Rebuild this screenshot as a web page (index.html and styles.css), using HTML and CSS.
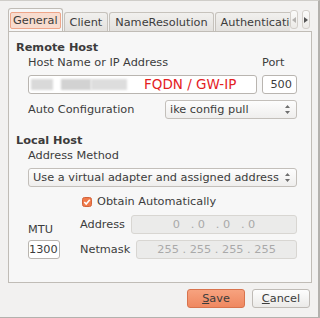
FILE: index.html
```html
<!DOCTYPE html>
<html lang="en">
  <head>
    <meta charset="UTF-8" />
    <title>VPN site configuration</title>
    <link rel="stylesheet" href="styles.css">
  </head>
  <body>
    <div class="dialog">
      <div class="notebook">
        <div class="tabbar">
          <div class="tabs">
            <div class="tab active"><span class="focus">General</span></div>
            <div class="tab">Client</div>
            <div class="tab">NameResolution</div>
            <div class="tab">Authentication</div>
          </div>
          <div class="scrollers">
            <span class="scroller off">
              <svg width="4" height="6" viewBox="0 0 4 6"><path d="M4 0 L0 3 L4 6 Z" /></svg>
            </span>
            <span class="scroller">
              <svg width="4" height="6" viewBox="0 0 4 6"><path d="M0 0 L4 3 L0 6 Z" /></svg>
            </span>
          </div>
        </div>

        <div class="page">
          <div class="section-title">Remote Host</div>
          <div class="section">
            <div class="host-grid">
              <span>Host Name or IP Address</span>
              <span>Port</span>
              <div class="entry host">
                <span class="smudge s1"></span>
                <span class="smudge s2"></span>
                <span class="smudge s3"></span>
                <span class="note">FQDN / GW-IP</span>
              </div>
              <div class="entry port">500</div>
            </div>
            <div class="option-row">
              <span>Auto Configuration</span>
              <div class="combo short">
                <span>ike config pull</span>
                <svg class="updown" width="5" height="9" viewBox="0 0 5 9"><path d="M2.5 0 L5 3 L0 3 Z M0 6 L5 6 L2.5 9 Z" /></svg>
              </div>
            </div>
          </div>

          <div class="section-title second">Local Host</div>
          <div class="section">
            <div class="label">Address Method</div>
            <div class="combo wide">
              <span>Use a virtual adapter and assigned address</span>
              <svg class="updown" width="5" height="9" viewBox="0 0 5 9"><path d="M2.5 0 L5 3 L0 3 Z M0 6 L5 6 L2.5 9 Z" /></svg>
            </div>
            <div class="check-row">
              <svg width="10" height="10" viewBox="0 0 10 10">
                <rect x="0.5" y="0.5" width="9" height="9" rx="2" fill="#f07a4a" stroke="#d2643c" />
                <path d="M2.3 5 L4.2 7 L7.8 2.8" fill="none" stroke="#fff" stroke-width="1.6" />
              </svg>
              <span>Obtain Automatically</span>
            </div>
            <div class="addr-grid">
              <span class="mtu-label">MTU</span>
              <div class="addr-row">
                <span>Address</span>
                <div class="entry off">0&nbsp;&nbsp;&nbsp;.&nbsp;0&nbsp;&nbsp;&nbsp;.&nbsp;0&nbsp;&nbsp;&nbsp;.&nbsp;0</div>
              </div>
              <div class="entry mtu">1300</div>
              <div class="addr-row">
                <span>Netmask</span>
                <div class="entry off">255 . 255 . 255 . 255</div>
              </div>
            </div>
          </div>
        </div>
      </div>

      <div class="actions">
        <button class="btn primary"><u>S</u>ave</button>
        <button class="btn"><u>C</u>ancel</button>
      </div>
    </div>
  </body>
</html>
```

FILE: styles.css
```css
body {
  margin: 0;
  background-color: #f2f1f0;
  font-family: "DejaVu Sans", sans-serif;
  font-size: 11.3px;
  color: #3c3c3c;
}

.dialog {
  width: 320px;
  height: 318px;
  box-sizing: border-box;
  padding: 7px 6px 0 8px;
  border-top: 1px solid #cfcdc9;
  border-right: 2px solid #b3b1ad;
  border-bottom: 1px solid #b3b1ad;
  background-color: #f2f1f0;
}

/* tabs */
.tabbar {
  display: flex;
  height: 23px;
}
.tabs {
  width: 282px;
  display: flex;
  align-items: flex-end;
  overflow: hidden;
  position: relative;
  z-index: 1;
}
.tab {
  flex-shrink: 0;
  height: 19px;
  box-sizing: border-box;
  padding: 2px 5px 0 5px;
  margin-left: 1px;
  line-height: 15px;
  white-space: nowrap;
  border: 1px solid #c6c2bc;
  border-bottom: none;
  border-radius: 3px 3px 0 0;
  background: linear-gradient(#f1f0ee, #e3e1de);
}
.tab.active {
  height: 24px;
  margin: 0 0 -1px 0;
  padding: 3px 1px 0 1px;
  background: #f7f7f7;
  border-color: #c0bcb6;
}
.focus {
  display: block;
  padding: 0 2px;
  line-height: 15px;
  border: 1px solid #eea68a;
  border-radius: 2px;
  background-color: #f8dccf;
}
.scrollers {
  display: flex;
  gap: 4px;
  padding: 2px 0 1px 0;
}
.scroller {
  width: 8px;
  height: 19px;
  box-sizing: border-box;
  display: flex;
  justify-content: center;
  align-items: center;
  border: 1px solid #d3cfca;
  border-radius: 3px;
  background: linear-gradient(#fbfbfa, #eceae7);
  fill: #555;
}
.scroller.off {
  fill: #b5b3b0;
}

/* page */
.page {
  height: 252px;
  box-sizing: border-box;
  padding: 8px 14px 0 7px;
  border: 1px solid #c0bcb6;
  background-color: #f7f7f7;
  line-height: 15px;
}
.section-title {
  font-weight: bold;
}
.section-title.second {
  margin-top: 14px;
}
.section {
  margin-left: 12px;
}

.entry {
  height: 19px;
  box-sizing: border-box;
  border: 1px solid #b9b5b0;
  border-radius: 3px;
  background-color: #fff;
  line-height: 17px;
  white-space: nowrap;
  overflow: hidden;
}

.host-grid {
  display: grid;
  grid-template-columns: 1fr 35px;
  column-gap: 5px;
  row-gap: 5px;
}
.host {
  display: flex;
  align-items: center;
  padding-left: 2px;
}
.smudge {
  height: 11px;
  background-color: #d9d9d9;
  filter: blur(1.2px);
}
.s1 {
  width: 22px;
}
.s2 {
  width: 30px;
  margin-left: 8px;
  background-color: #d2d2d2;
}
.s3 {
  width: 36px;
  background-color: #dddddd;
}
.note {
  margin-left: 17px;
  font-size: 13.5px;
  color: #e4211f;
}
.port {
  text-align: right;
  padding-right: 4px;
}

.option-row {
  display: flex;
  justify-content: space-between;
  align-items: center;
  margin-top: 6px;
}
.combo {
  height: 19px;
  box-sizing: border-box;
  display: flex;
  justify-content: space-between;
  align-items: center;
  padding: 0 6px 0 4px;
  border: 1px solid #c3bfba;
  border-radius: 3px;
  background: linear-gradient(#fdfdfd, #efeeed);
  white-space: nowrap;
}
.combo.short {
  width: 132px;
}
.combo.wide {
  margin-top: 5px;
}
.updown {
  fill: #6f6f6f;
}

.check-row {
  display: flex;
  align-items: center;
  gap: 5px;
  margin: 7px 0 0 54px;
}

.addr-grid {
  display: grid;
  grid-template-columns: 32px 1fr;
  column-gap: 20px;
  row-gap: 6px;
  margin-top: 6px;
}
.mtu-label {
  align-self: end;
  margin-bottom: -3px;
}
.addr-row {
  display: flex;
  align-items: center;
  gap: 6px;
}
.addr-row .entry {
  flex: 1;
}
.entry.off {
  border-color: #d8d6d2;
  background-color: #ebebea;
  color: #a9a9a9;
  text-align: center;
}
.mtu {
  padding-left: 0;
}

/* buttons */
.actions {
  display: flex;
  justify-content: flex-end;
  gap: 7px;
  margin: 6px 2px 0 0;
}
.btn {
  width: 58px;
  height: 19px;
  padding: 0;
  font-family: "DejaVu Sans", sans-serif;
  font-size: 11.3px;
  color: #3c3c3c;
  border: 1px solid #bfbbb6;
  border-radius: 3px;
  background: linear-gradient(#fdfdfd, #ebeae8);
}
.btn.primary {
  border-color: #d8734d;
  background: linear-gradient(#f7a27f, #ef8860);
}
```
